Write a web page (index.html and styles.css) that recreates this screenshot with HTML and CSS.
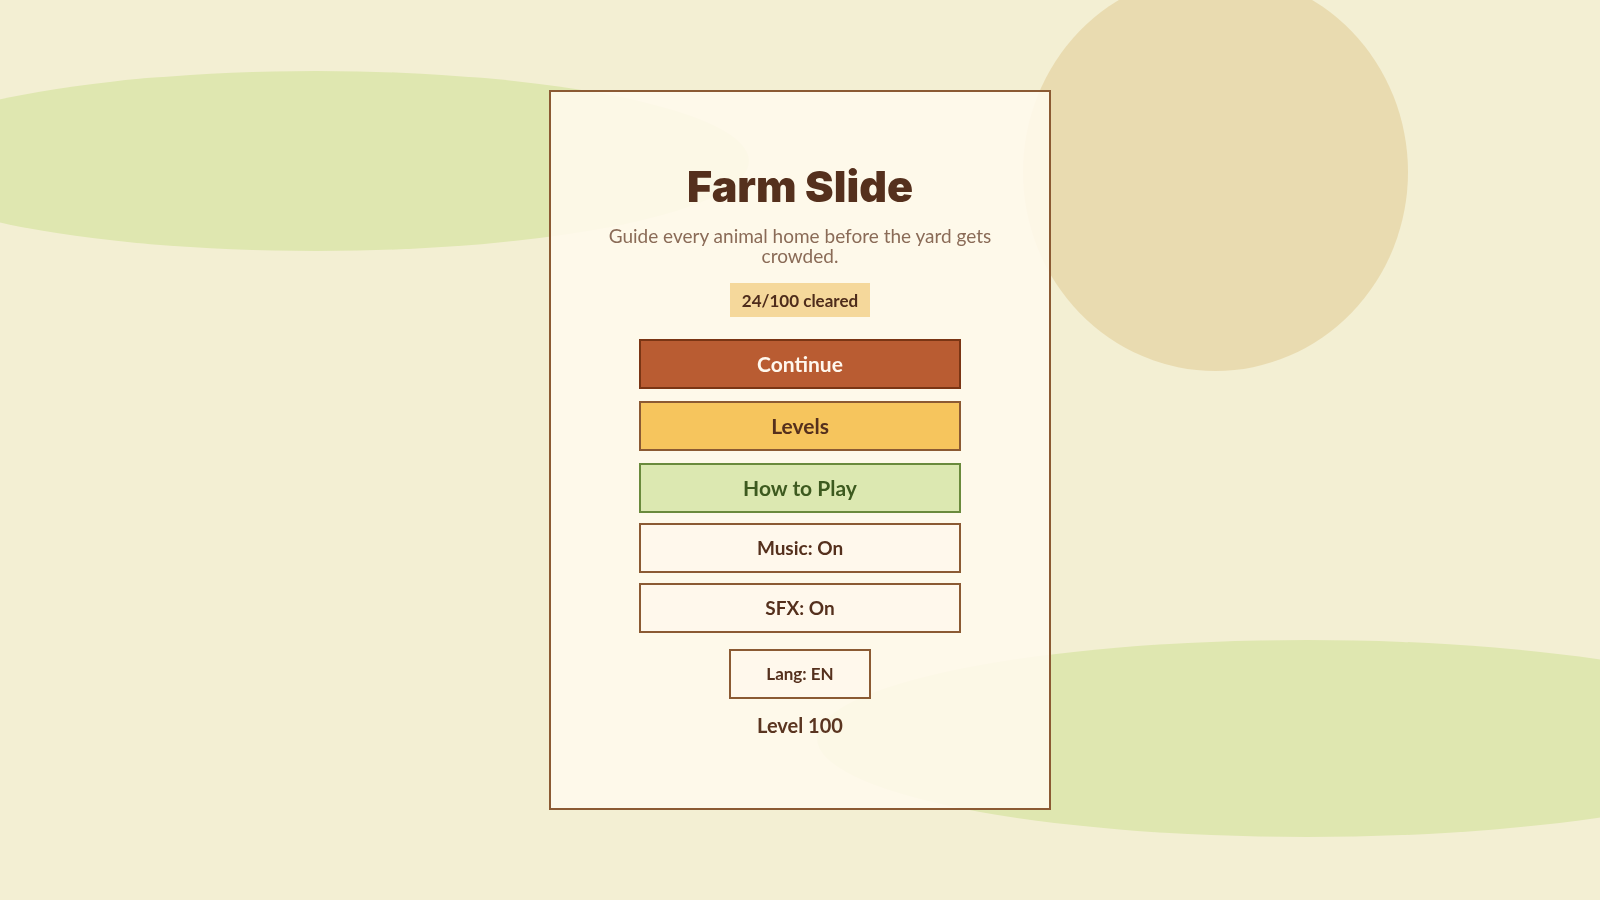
FILE: index.html
```html
<!DOCTYPE html>
<html lang="en">
<head>
    <meta charset="UTF-8">
    <meta name="viewport" content="width=device-width, initial-scale=1.0">
    <title>Farm Slide</title>
    <link rel="stylesheet" href="styles.css">
</head>
<body>
    <div class="field">
        <div class="blob blob-left"></div>
        <div class="blob blob-sun"></div>
        <div class="blob blob-right"></div>
    </div>

    <main class="menu">
        <h1 class="title">Farm Slide</h1>
        <p class="tagline">Guide every animal home before the yard gets crowded.</p>
        <div class="progress">24/100 cleared</div>

        <div class="main-buttons">
            <button class="btn btn-continue">Continue</button>
            <button class="btn btn-levels">Levels</button>
            <button class="btn btn-help">How to Play</button>
        </div>

        <div class="toggles">
            <button class="btn btn-plain">Music: On</button>
            <button class="btn btn-plain">SFX: On</button>
        </div>

        <button class="btn btn-plain btn-lang">Lang: EN</button>
        <div class="level-label">Level 100</div>
    </main>
</body>
</html>
```

FILE: styles.css
```css
body {
    font-family: Lato, "Open Sans", Arial, sans-serif;
    margin: 0;
    padding: 0;
    height: 100vh;
    overflow: hidden;
    background-color: #f3efd3;
    display: flex;
    justify-content: center;
    align-items: center;
    color: #55301d;
}

/* background shapes */
.field {
    position: fixed;
    inset: 0;
    z-index: 0;
}

.blob {
    position: absolute;
    border-radius: 50%;
}

.blob-left {
    left: -117px;
    top: 71px;
    width: 866px;
    height: 180px;
    background: #dfe7b0;
}

.blob-sun {
    left: 1023px;
    top: -27px;
    width: 385px;
    height: 398px;
    background: #e9dbb0;
}

.blob-right {
    left: 817px;
    top: 640px;
    width: 980px;
    height: 197px;
    background: #dfe7b0;
}

.menu {
    position: relative;
    z-index: 1;
    box-sizing: border-box;
    width: 502px;
    height: 720px;
    padding-top: 68px;
    border: 2px solid #8b5a33;
    background: rgba(255, 249, 236, 0.9);
    display: flex;
    flex-direction: column;
    align-items: center;
}

.title {
    margin: 0;
    font-family: Inter, Lato, sans-serif;
    font-size: 43px;
    font-weight: 900;
    line-height: 52px;
    color: #55301d;
}

.tagline {
    margin: 14px 0 0;
    max-width: 400px;
    text-align: center;
    font-size: 19px;
    line-height: 20px;
    color: #8a6b57;
}

.progress {
    margin-top: 17px;
    height: 34px;
    padding: 0 12px;
    display: flex;
    align-items: center;
    background: #f5d89b;
    font-size: 17px;
    font-weight: 700;
    color: #4e2c1b;
}

.btn {
    box-sizing: border-box;
    width: 322px;
    height: 50px;
    padding: 0 0 2px;
    border: 2px solid #8b5a33;
    border-radius: 0;
    font-family: inherit;
    font-size: 21px;
    font-weight: 700;
    color: #55301d;
    cursor: pointer;
}

.main-buttons {
    margin-top: 22px;
    display: flex;
    flex-direction: column;
    gap: 12px;
}

.btn-continue {
    background: #b95c32;
    border-color: #7a3514;
    color: #fff8ee;
}

.btn-levels {
    background: #f6c55d;
}

.btn-help {
    background: #dce8b1;
    border-color: #6a8a3c;
    color: #3d5a1f;
}

.toggles {
    margin-top: 10px;
    display: flex;
    flex-direction: column;
    gap: 10px;
}

.btn-plain {
    background: #fff8ec;
    font-size: 19px;
}

.btn-lang {
    margin-top: 16px;
    width: 142px;
    font-size: 17px;
}

.level-label {
    margin-top: 14px;
    font-size: 20px;
    font-weight: 700;
    line-height: 1.2;
    color: #5a3520;
}
```
